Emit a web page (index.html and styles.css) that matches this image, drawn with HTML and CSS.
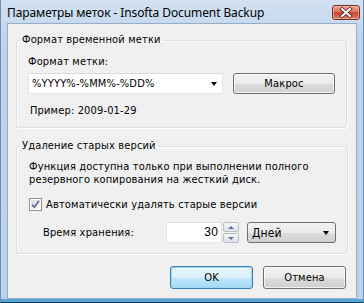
FILE: index.html
```html
<!DOCTYPE html>
<html lang="ru">
<head>
<meta charset="utf-8">
<link rel="stylesheet" href="styles.css">
</head>
<body>
<div class="window">
  <div class="titlebar">
    <span class="title">Параметры меток - Insofta Document Backup</span>
    <div class="close">
      <svg width="28" height="15" viewBox="0 0 28 15">
        <defs>
          <linearGradient id="cg" x1="0" y1="0" x2="0" y2="1">
            <stop offset="0" stop-color="#e9a99a"/>
            <stop offset="0.45" stop-color="#d9775f"/>
            <stop offset="0.5" stop-color="#c7462c"/>
            <stop offset="1" stop-color="#d9826a"/>
          </linearGradient>
        </defs>
        <rect x="0.5" y="0.5" width="27" height="14" rx="2.5" fill="url(#cg)" stroke="#7a2b1f"/>
        <rect x="1.5" y="1.5" width="25" height="12" rx="1.5" fill="none" stroke="#f3c7bb" stroke-opacity="0.6"/>
        <path d="M10 4 L18 11 M18 4 L10 11" stroke="#5a2018" stroke-width="3.6" stroke-linecap="square"/>
        <path d="M10 4 L18 11 M18 4 L10 11" stroke="#ffffff" stroke-width="2" stroke-linecap="square"/>
      </svg>
    </div>
  </div>
  <div class="client">
    <fieldset class="group">
      <legend>Формат временной метки</legend>
      <div class="gbody g1">
        <div class="field-label">Формат метки:</div>
        <div class="row">
          <div class="combo-edit">
            <span class="value">%YYYY%-%MM%-%DD%</span>
            <span class="arrow"></span>
          </div>
          <button class="btn macro">Макрос</button>
        </div>
        <div class="example">Пример: 2009-01-29</div>
      </div>
    </fieldset>
    <fieldset class="group second">
      <legend>Удаление старых версий</legend>
      <div class="gbody g2">
        <p class="note">Функция доступна только при выполнении полного<br>резервного копирования на жесткий диск.</p>
        <label class="check">
          <span class="cb">
            <svg width="13" height="13" viewBox="0 0 13 13">
              <defs>
                <linearGradient id="cbg" x1="0" y1="0" x2="1" y2="1">
                  <stop offset="0" stop-color="#d8dbe0"/>
                  <stop offset="1" stop-color="#fbfbfb"/>
                </linearGradient>
              </defs>
              <rect x="0.5" y="0.5" width="12" height="12" fill="#fff" stroke="#8e8f8f"/>
              <rect x="2" y="2" width="9" height="9" fill="url(#cbg)"/>
              <path d="M3 6.5 L5.3 9.2 L10 2.8" fill="none" stroke="#5a6790" stroke-width="1.7"/>
            </svg>
          </span>
          <span>Автоматически удалять старые версии</span>
        </label>
        <div class="keep">
          <span class="keep-label">Время хранения:</span>
          <div class="num-edit">30</div>
          <div class="spin">
            <div class="spin-btn"><span class="tri up"></span></div>
            <div class="spin-btn"><span class="tri down"></span></div>
          </div>
          <div class="combo-drop">
            <span>Дней</span>
            <span class="arrow"></span>
          </div>
        </div>
      </div>
    </fieldset>
    <div class="buttons">
      <button class="btn ok">OK</button>
      <button class="btn">Отмена</button>
    </div>
  </div>
</div>
</body>
</html>
```
FILE: styles.css
```css
* { box-sizing: border-box; }
html, body { margin: 0; padding: 0; }
body {
  width: 364px;
  height: 303px;
  overflow: hidden;
  font-family: "DejaVu Sans Condensed", "DejaVu Sans", sans-serif;
  font-stretch: condensed;
  font-size: 11px;
  letter-spacing: 0.15px;
  color: #000;
}
.window {
  width: 364px;
  height: 303px;
  display: flex;
  flex-direction: column;
  background: linear-gradient(#d3e2f3, #bfd3ea 40px, #bcd1ea);
  border-left: 1px solid #6d8fb5;
  border-right: 1px solid #6d8fb5;
  border-bottom: 1px solid #1d3550;
  box-shadow: inset 0 -3px 0 #58a6d6;
}
.titlebar {
  height: 23px;
  flex: none;
  display: flex;
  align-items: center;
  justify-content: space-between;
  padding: 0 3px 0 6px;
}
.title {
  font-family: "Noto Sans", sans-serif;
  font-stretch: normal;
  font-size: 12px;
  letter-spacing: -0.1px;
  color: #000;
  margin-top: 1px;
}
.close {
  width: 28px;
  height: 15px;
  margin-top: 2px;
}
.close svg { display: block; }
.client {
  flex: 1;
  margin: 0 6px 3px 6px;
  background: #f0f0f0;
  border: 1px solid #97adc6;
  padding: 9px 9px 0 8px;
  display: flex;
  flex-direction: column;
}
.group {
  margin: 0;
  padding: 0;
  border: 1px solid #d5dfe5;
  border-radius: 3px;
  box-shadow: inset 1px 1px 0 #fff, 1px 1px 0 #fff;
}
.group.second { margin-top: 11px; }
.group legend {
  margin-left: 3px;
  padding: 0 2px;
  line-height: 14px;
}
.gbody { padding: 8px 11px 9px 11px; }
.g2 { padding-top: 7px; padding-bottom: 10px; }
.field-label { line-height: 14px; }
.row {
  display: flex;
  gap: 10px;
  margin-top: 4px;
}
.combo-edit {
  width: 195px;
  height: 21px;
  background: #fff;
  border: 1px solid #e2e6ea;
  border-top-color: #d8dde2;
  display: flex;
  align-items: center;
  justify-content: space-between;
  padding: 0 4px 0 3px;
}
.arrow {
  width: 0;
  height: 0;
  border-left: 3.5px solid transparent;
  border-right: 3.5px solid transparent;
  border-top: 4px solid #000;
}
.combo-edit .arrow { margin-right: 1px; }
.btn {
  font: inherit;
  letter-spacing: inherit;
  color: #000;
  height: 21px;
  border: 1px solid #707070;
  border-radius: 3px;
  background: linear-gradient(#f2f2f2 0%, #ebebeb 50%, #dddddd 51%, #cfcfcf 100%);
  box-shadow: inset 0 0 0 1px rgba(255,255,255,0.7);
  padding: 0;
}
.macro { width: 102px; }
.example {
  line-height: 14px;
  margin-top: 10px;
  padding-left: 2px;
}
.note {
  margin: 0;
  line-height: 13px;
  padding-left: 1px;
}
.check {
  display: flex;
  align-items: center;
  gap: 4px;
  margin-top: 11px;
  line-height: 15px;
  padding-left: 1px;
}
.cb { width: 13px; height: 13px; }
.cb svg { display: block; }
.keep {
  display: flex;
  align-items: center;
  margin-top: 10px;
  padding-left: 15px;
}
.keep-label { width: 123px; }
.num-edit {
  width: 56px;
  height: 21px;
  background: #fff;
  border: 1px solid #e2e6ea;
  border-top-color: #d8dde2;
  text-align: right;
  line-height: 19px;
  padding-right: 3px;
  font-family: "Liberation Sans", sans-serif;
  font-stretch: normal;
  font-size: 12px;
}
.spin {
  width: 16px;
  height: 21px;
  margin-left: 1px;
  display: flex;
  flex-direction: column;
  gap: 1px;
}
.spin-btn {
  flex: 1;
  border: 1px solid #b8bdc4;
  border-radius: 2px;
  background: linear-gradient(#f6f7f9, #dde2e8);
  display: flex;
  align-items: center;
  justify-content: center;
}
.tri {
  width: 0;
  height: 0;
  border-left: 3.5px solid transparent;
  border-right: 3.5px solid transparent;
}
.tri.up { border-bottom: 3px solid #56739f; }
.tri.down { border-top: 3px solid #56739f; }
.combo-drop {
  width: 89px;
  height: 21px;
  margin-left: 8px;
  border: 1px solid #707070;
  border-radius: 3px;
  background: linear-gradient(#f2f2f2 0%, #ebebeb 50%, #dddddd 51%, #cfcfcf 100%);
  display: flex;
  align-items: center;
  justify-content: space-between;
  padding: 0 6px 0 4px;
  font-size: 12px;
}
.buttons {
  display: flex;
  justify-content: flex-end;
  gap: 10px;
  margin-top: 12px;
  padding-right: 1px;
}
.buttons .btn {
  width: 83px;
  height: 23px;
}
.btn.ok {
  border-color: #3c7fb1;
  background: linear-gradient(#eaf6fd 0%, #d9f0fc 50%, #bee6fd 51%, #a7d9f5 100%);
  box-shadow: inset 0 0 0 1px #9ed8f5;
}
```
